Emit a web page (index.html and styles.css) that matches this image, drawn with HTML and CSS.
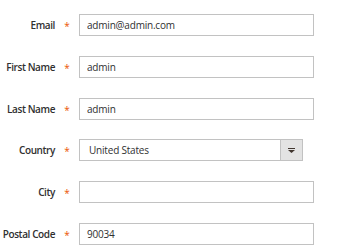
FILE: index.html
```html
<!DOCTYPE html>
<html lang="en">
<head>
    <meta charset="UTF-8">
    <meta name="viewport" content="width=device-width, initial-scale=1.0">
    <title>Account Information</title>
    <link rel="stylesheet" href="styles.css">
</head>
<body>

    <form class="account-form">
        <div class="field">
            <label for="email">Email</label>
            <span class="required">*</span>
            <input type="text" id="email" value="admin@admin.com">
        </div>

        <div class="field">
            <label for="first-name">First Name</label>
            <span class="required">*</span>
            <input type="text" id="first-name" value="admin">
        </div>

        <div class="field">
            <label for="last-name">Last Name</label>
            <span class="required">*</span>
            <input type="text" id="last-name" value="admin">
        </div>

        <div class="field">
            <label for="country">Country</label>
            <span class="required">*</span>
            <div class="select-wrap">
                <div class="select-value" id="country">United States</div>
                <div class="select-button">
                    <svg width="7" height="5" viewBox="0 0 7 5">
                        <rect x="0" y="0" width="7" height="1" fill="#41362f"/>
                        <path d="M0 2 L7 2 L3.5 5 Z" fill="#41362f"/>
                    </svg>
                </div>
            </div>
        </div>

        <div class="field">
            <label for="city">City</label>
            <span class="required">*</span>
            <input type="text" id="city" value="">
        </div>

        <div class="field">
            <label for="postal-code">Postal Code</label>
            <span class="required">*</span>
            <input type="text" id="postal-code" value="90034">
        </div>
    </form>

</body>
</html>
```

FILE: styles.css
```css
body {
    font-family: 'Open Sans', sans-serif;
    background-color: #fff;
    color: #303030;
    margin: 0;
    padding: 0;
}

.account-form {
    padding-top: 14px;
    display: flex;
    flex-direction: column;
    gap: 19.8px;
}

.field {
    display: grid;
    grid-template-columns: 55px 24px 235px;
    align-items: center;
    height: 22px;
}

.field label {
    text-align: right;
    white-space: nowrap;
    font-size: 10px;
    font-weight: 600;
    letter-spacing: -0.4px;
    color: #303030;
}

.required {
    color: #eb5202;
    font-size: 10px;
    text-align: center;
    padding-top: 2px;
}

.field input {
    box-sizing: border-box;
    width: 235px;
    height: 22px;
    border: 1px solid #c2c2c2;
    padding: 0 7px;
    font-family: 'Open Sans', sans-serif;
    font-size: 10px;
    letter-spacing: -0.2px;
    color: #303030;
    outline: none;
}

.select-wrap {
    box-sizing: border-box;
    display: flex;
    width: 224px;
    height: 22px;
    border: 1px solid #c2c2c2;
}

.select-value {
    flex: 1;
    padding: 0 9px;
    font-size: 10px;
    letter-spacing: -0.2px;
    line-height: 20px;
    color: #303030;
}

.select-button {
    width: 21px;
    border-left: 1px solid #c2c2c2;
    background-color: #e3e3e3;
    display: flex;
    align-items: center;
    justify-content: center;
}
```
